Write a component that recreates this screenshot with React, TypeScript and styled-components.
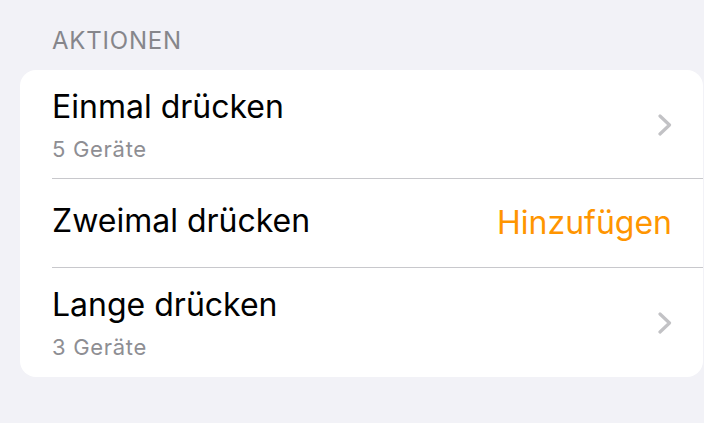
import React from "react";
import styled, { createGlobalStyle } from "styled-components";

const Global = createGlobalStyle`
  html, body { margin: 0; padding: 0; background: #f2f2f7; }
  body { font-family: Inter, "Noto Sans", sans-serif; -webkit-font-smoothing: antialiased; }
`;

const Page = styled.div`
  width: 704px;
  height: 423px;
  background: #f2f2f7;
  overflow: hidden;
  display: flex;
  flex-direction: column;
`;

const SectionHeader = styled.div`
  padding: 27px 0 0 52px;
  height: 70px;
  box-sizing: border-box;
  font-size: 24px;
  line-height: 28px;
  letter-spacing: 0.8px;
  color: #86868b;
`;

const Card = styled.div`
  margin-left: 20px;
  width: 683px;
  background: #ffffff;
  border-radius: 16px;
  display: flex;
  flex-direction: column;
  overflow: hidden;
`;

const Row = styled.div<{ $h: number; $divider?: boolean; $pb?: number }>`
  height: ${(p) => p.$h}px;
  display: flex;
  align-items: center;
  padding: 0 31px ${(p) => p.$pb ?? 0}px 32px;
  position: relative;
  box-sizing: border-box;
  ${(p) =>
    p.$divider &&
    `&::after {
      content: "";
      position: absolute;
      left: 32px;
      right: 0;
      bottom: 0;
      height: 1px;
      background: #c8c8cc;
    }`}
`;

const Texts = styled.div`
  flex: 1;
  display: flex;
  flex-direction: column;
`;

const Title = styled.div`
  font-size: 32px;
  line-height: 38px;
  color: #000;
`;

const Subtitle = styled.div`
  font-size: 22px;
  line-height: 26px;
  color: #8e8e93;
  letter-spacing: 0.7px;
  margin-top: 10px;
`;

const Action = styled.div`
  font-size: 32px;
  line-height: 38px;
  color: #ff9500;
  margin-top: 3px;
`;

const Chevron = () => (
  <svg width="14" height="22" viewBox="0 0 14 22" fill="none">
    <path d="M2 2 L11.5 11 L2 20" stroke="#c2c2c5" strokeWidth="3.2" strokeLinecap="round" strokeLinejoin="round" />
  </svg>
);

export default function App() {
  return (
    <Page>
      <Global />
      <SectionHeader>AKTIONEN</SectionHeader>
      <Card>
        <Row $h={109} $divider>
          <Texts>
            <Title>Einmal drücken</Title>
            <Subtitle>5 Geräte</Subtitle>
          </Texts>
          <Chevron />
        </Row>
        <Row $h={89} $divider $pb={5}>
          <Texts>
            <Title>Zweimal drücken</Title>
          </Texts>
          <Action>Hinzufügen</Action>
        </Row>
        <Row $h={109}>
          <Texts>
            <Title>Lange drücken</Title>
            <Subtitle>3 Geräte</Subtitle>
          </Texts>
          <Chevron />
        </Row>
      </Card>
    </Page>
  );
}
